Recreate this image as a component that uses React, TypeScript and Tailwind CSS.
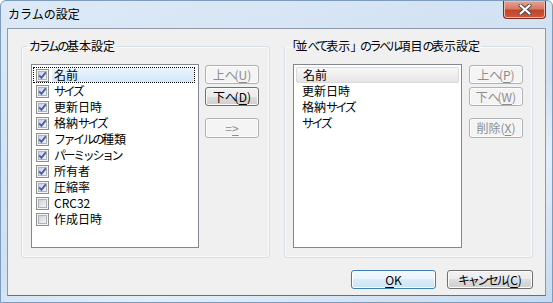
import React from 'react';

type BtnProps = {
  pre: string;
  key2: string;
  post: string;
  disabled?: boolean;
  isDefault?: boolean;
  className?: string;
};

// kana and CJK brackets are narrower than kanji in the original UI font
const J: React.FC<{ text: string }> = ({ text }) => (
  <>
    {text.split(/([\u3000-\u30ff]+)/).map((part, i) =>
      /^[\u3000-\u30ff]+$/.test(part) ? (
        <span key={i} className="tracking-[-2.4px]">
          {part}
        </span>
      ) : (
        <React.Fragment key={i}>{part}</React.Fragment>
      )
    )}
  </>
);

const Checkbox: React.FC<{ checked: boolean }> = ({ checked }) => (
  <svg width="13" height="13" viewBox="0 0 13 13" className="shrink-0">
    <defs>
      <linearGradient id="cbInner" x1="0" y1="0" x2="1" y2="1">
        <stop offset="0" stopColor="#cbcfd5" />
        <stop offset="1" stopColor="#f7f7f7" />
      </linearGradient>
    </defs>
    <rect x="0.5" y="0.5" width="12" height="12" fill="#f4f4f4" stroke="#8e8f8f" />
    <rect x="2.5" y="2.5" width="8" height="8" fill="url(#cbInner)" stroke="#aeb3b9" />
    {checked && (
      <path d="M3.2 6.4 L5.4 8.8 L9.8 3.4" fill="none" stroke="#3c5fb0" strokeWidth="1.8" />
    )}
  </svg>
);

const Btn: React.FC<BtnProps> = ({ pre, key2, post, disabled, isDefault, className }) => {
  let look =
    'border-[#707070] text-black bg-[linear-gradient(#f2f2f2_0%,#ebebeb_50%,#dddddd_50%,#cfcfcf_100%)] shadow-[inset_0_0_0_1px_#fbfbfb]';
  if (disabled) look = 'border-[#adb2b5] text-[#8d8d8d] bg-[#f4f4f4] shadow-[inset_0_0_0_1px_#fcfcfc]';
  if (isDefault)
    look =
      'border-[#3c7fb1] text-black bg-[linear-gradient(#f3f9fd_0%,#e8f3fb_50%,#d9ecf8_50%,#c9e3f4_100%)] shadow-[inset_0_0_0_1px_#ffffff]';
  return (
    <div
      className={`flex items-center justify-center rounded-[3px] border text-[12px] leading-none ${look} ${className ?? ''}`}
    >
      <span>
        <J text={pre} />
        <span className="underline underline-offset-2">{key2}</span>
        {post}
      </span>
    </div>
  );
};

const leftItems: [string, boolean][] = [
  ['名前', true],
  ['サイズ', true],
  ['更新日時', true],
  ['格納サイズ', true],
  ['ファイルの種類', true],
  ['パーミッション', true],
  ['所有者', true],
  ['圧縮率', true],
  ['CRC32', false],
  ['作成日時', false],
];

const rightItems = ['名前', '更新日時', '格納サイズ', 'サイズ'];

const App: React.FC = () => {
  return (
    <div className="w-[553px] h-[303px] flex flex-col overflow-hidden rounded-t-[6px] border border-[#7d9bbd] bg-[linear-gradient(160deg,#dde9f6_0%,#cfe0f2_55%,#e4eef8_70%,#c6daef_100%)] font-['Noto_Sans_CJK_JP',sans-serif] text-black">
      {/* Title bar */}
      <div className="h-[27px] flex items-start justify-between pl-[7px] pr-[6px]">
        <span className="mt-[6px] text-[12px] leading-[14px]">カラムの設定</span>
        <div className="w-[43px] h-[18px] flex items-center justify-center rounded-b-[4px] border border-t-0 border-[#7a2a1e] bg-[linear-gradient(#e9a591_0%,#d77a63_45%,#c2432b_55%,#cc5a3c_100%)] shadow-[inset_0_0_0_1px_#f0b9a8]">
          <svg width="14" height="11" viewBox="0 0 14 11">
            <path d="M2.5 1.5 L11.5 9.5 M11.5 1.5 L2.5 9.5" stroke="#4a4a4a" strokeWidth="4" strokeLinecap="round" />
            <path d="M2.5 1.5 L11.5 9.5 M11.5 1.5 L2.5 9.5" stroke="#ffffff" strokeWidth="2.2" strokeLinecap="round" />
          </svg>
        </div>
      </div>

      {/* Client area */}
      <div className="mx-[6px] h-[268px] flex flex-col border border-[#8e9aa8] border-b-[#6b6f75] bg-[#f0f0f0] pl-[13px] pr-[12px] pt-[10px] text-[12px]">
        <div className="flex gap-[14px]">
          {/* Left group */}
          <fieldset className="w-[249px] h-[219px] rounded-[3px] border border-[#d5dfe5] pl-[9px] shadow-[inset_0_0_0_1px_#fafafa]">
            <legend className="ml-[-4px] px-[2px] leading-[14px]">
              <J text="カラムの基本設定" />
            </legend>
            <div className="flex gap-[6px] pt-[11px]">
              <div className="w-[168px] h-[184px] border border-[#828790] bg-white pt-[2px]">
                {leftItems.map(([name, checked], i) => (
                  <div key={name} className="h-[16px] flex items-center ml-[1px] mr-[3px] relative">
                    {i === 0 && (
                      <div className="absolute inset-0 border border-dotted border-black" />
                    )}
                    <div className="ml-[3px]">
                      <Checkbox checked={checked} />
                    </div>
                    <div
                      className={`ml-[3px] flex-1 h-[14px] flex items-center pl-[2px] ${
                        i === 0 ? 'bg-[linear-gradient(#eaf4fd,#d3e8fb)] rounded-[2px]' : ''
                      }`}
                    >
                      <span>
                        <J text={name} />
                      </span>
                    </div>
                  </div>
                ))}
              </div>
              <div className="flex flex-col w-[54px]">
                <Btn pre="上へ(" key2="U" post=")" disabled className="h-[19px] mt-[1px]" />
                <Btn pre="下へ(" key2="D" post=")" className="h-[19px] mt-[3px]" />
                <Btn pre="=" key2=">" post="" disabled className="h-[20px] mt-[12px]" />
              </div>
            </div>
          </fieldset>

          {/* Right group */}
          <fieldset className="w-[249px] h-[219px] rounded-[3px] border border-[#d5dfe5] pl-[8px] shadow-[inset_0_0_0_1px_#fafafa]">
            <legend className="ml-[-8px] px-[1px] leading-[14px]">
              <J text="「並べて表示」のラベル項目の表示設定" />
            </legend>
            <div className="flex gap-[7px] pt-[11px]">
              <div className="w-[169px] h-[184px] border border-[#828790] bg-white pt-[2px] px-[2px]">
                {rightItems.map((name, i) => (
                  <div
                    key={name}
                    className={`h-[16px] flex items-center pl-[6px] ${
                      i === 0
                        ? 'rounded-[2px] border border-[#dadada] bg-[linear-gradient(#f8f8f8,#e5e5e5)] pl-[5px]'
                        : ''
                    }`}
                  >
                    <span>
                      <J text={name} />
                    </span>
                  </div>
                ))}
              </div>
              <div className="flex flex-col w-[54px]">
                <Btn pre="上へ(" key2="P" post=")" disabled className="h-[19px] mt-[1px]" />
                <Btn pre="下へ(" key2="W" post=")" disabled className="h-[19px] mt-[3px]" />
                <Btn pre="削除(" key2="X" post=")" disabled className="h-[20px] mt-[12px]" />
              </div>
            </div>
          </fieldset>
        </div>

        {/* Bottom buttons */}
        <div className="flex justify-end gap-[11px] mt-[12px]">
          <Btn pre="" key2="O" post="K" isDefault className="w-[85px] h-[19px]" />
          <Btn pre="キャンセル(" key2="C" post=")" className="w-[86px] h-[19px]" />
        </div>
      </div>
    </div>
  );
};

export default App;
